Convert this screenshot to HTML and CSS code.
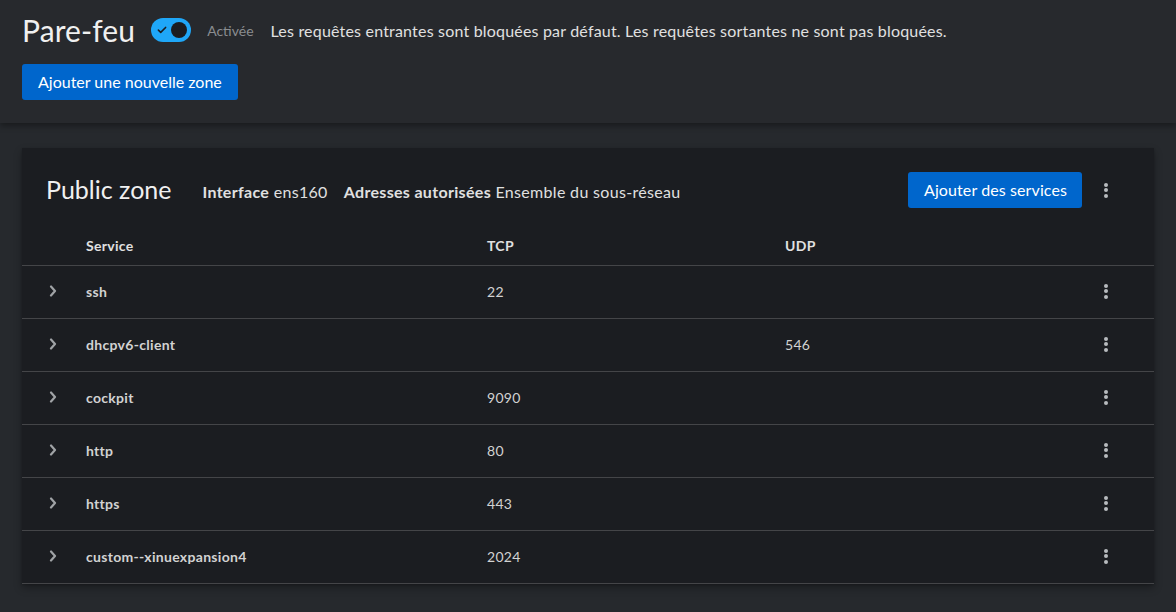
FILE: index.html
```html
<!DOCTYPE html>
<html lang="fr">
<head>
<meta charset="utf-8">
<title>Pare-feu</title>
<link rel="stylesheet" href="styles.css">
</head>
<body>
<header class="page-header">
  <div class="title-row">
    <h1 class="page-title">Pare-feu</h1>
    <span class="switch" role="switch" aria-checked="true">
      <svg class="switch-check" viewBox="0 0 12 10" width="10" height="8"><path d="M1.5 5.2 L4.4 8 L10.5 1.8" fill="none" stroke="#1b1d21" stroke-width="2" stroke-linecap="round" stroke-linejoin="round"/></svg>
      <span class="switch-knob"></span>
    </span>
    <span class="switch-label">Activée</span>
    <span class="status-text">Les requêtes entrantes sont bloquées par défaut. Les requêtes sortantes ne sont pas bloquées.</span>
  </div>
  <button class="btn btn-primary">Ajouter une nouvelle zone</button>
</header>

<main class="page-main">
  <section class="card">
    <div class="card-header">
      <h2 class="zone-title">Public zone</h2>
      <div class="zone-meta">
        <span><b>Interface</b> ens160</span>
        <span><b>Adresses autorisées</b> Ensemble du sous-réseau</span>
      </div>
      <div class="card-actions">
        <button class="btn btn-primary">Ajouter des services</button>
        <span class="kebab"><i></i><i></i><i></i></span>
      </div>
    </div>

    <div class="table">
      <div class="trow thead">
        <div></div>
        <div>Service</div>
        <div>TCP</div>
        <div>UDP</div>
        <div></div>
      </div>
      <div class="trow">
        <div class="toggle"><svg viewBox="0 0 8 12" width="8" height="12"><path d="M2 1.5 L6 6 L2 10.5" fill="none" stroke="currentColor" stroke-width="2.2" stroke-linecap="round" stroke-linejoin="round"/></svg></div>
        <div class="name">ssh</div>
        <div>22</div>
        <div></div>
        <div class="act"><span class="kebab"><i></i><i></i><i></i></span></div>
      </div>
      <div class="trow">
        <div class="toggle"><svg viewBox="0 0 8 12" width="8" height="12"><path d="M2 1.5 L6 6 L2 10.5" fill="none" stroke="currentColor" stroke-width="2.2" stroke-linecap="round" stroke-linejoin="round"/></svg></div>
        <div class="name">dhcpv6-client</div>
        <div></div>
        <div>546</div>
        <div class="act"><span class="kebab"><i></i><i></i><i></i></span></div>
      </div>
      <div class="trow">
        <div class="toggle"><svg viewBox="0 0 8 12" width="8" height="12"><path d="M2 1.5 L6 6 L2 10.5" fill="none" stroke="currentColor" stroke-width="2.2" stroke-linecap="round" stroke-linejoin="round"/></svg></div>
        <div class="name">cockpit</div>
        <div>9090</div>
        <div></div>
        <div class="act"><span class="kebab"><i></i><i></i><i></i></span></div>
      </div>
      <div class="trow">
        <div class="toggle"><svg viewBox="0 0 8 12" width="8" height="12"><path d="M2 1.5 L6 6 L2 10.5" fill="none" stroke="currentColor" stroke-width="2.2" stroke-linecap="round" stroke-linejoin="round"/></svg></div>
        <div class="name">http</div>
        <div>80</div>
        <div></div>
        <div class="act"><span class="kebab"><i></i><i></i><i></i></span></div>
      </div>
      <div class="trow">
        <div class="toggle"><svg viewBox="0 0 8 12" width="8" height="12"><path d="M2 1.5 L6 6 L2 10.5" fill="none" stroke="currentColor" stroke-width="2.2" stroke-linecap="round" stroke-linejoin="round"/></svg></div>
        <div class="name">https</div>
        <div>443</div>
        <div></div>
        <div class="act"><span class="kebab"><i></i><i></i><i></i></span></div>
      </div>
      <div class="trow">
        <div class="toggle"><svg viewBox="0 0 8 12" width="8" height="12"><path d="M2 1.5 L6 6 L2 10.5" fill="none" stroke="currentColor" stroke-width="2.2" stroke-linecap="round" stroke-linejoin="round"/></svg></div>
        <div class="name">custom--xinuexpansion4</div>
        <div>2024</div>
        <div></div>
        <div class="act"><span class="kebab"><i></i><i></i><i></i></span></div>
      </div>
    </div>
  </section>
</main>
</body>
</html>
```

FILE: styles.css
```css
* { box-sizing: border-box; }

html, body {
  margin: 0;
  height: 100%;
}

body {
  background: #26292d;
  color: #e0e0e0;
  font-family: "Lato", "Liberation Sans", sans-serif;
  font-size: 16px;
  overflow: hidden;
}

.page-header {
  background: #27292d;
  padding: 12px 22px 23px;
  height: 123px;
  box-shadow: 0 3px 6px rgba(0, 0, 0, 0.35);
  position: relative;
  z-index: 1;
}

.title-row {
  display: flex;
  align-items: center;
  height: 36px;
  margin-bottom: 16px;
}

.page-title {
  margin: 0;
  font-size: 30px;
  font-weight: 400;
  color: #f0f0f0;
  line-height: 36px;
  letter-spacing: 0.1px;
}

.switch {
  position: relative;
  display: inline-block;
  width: 40px;
  height: 24px;
  border-radius: 12px;
  background: #1fa7f8;
  margin-left: 16px;
}

.switch-check {
  position: absolute;
  left: 6px;
  top: 8px;
}

.switch-knob {
  position: absolute;
  right: 4px;
  top: 4px;
  width: 16px;
  height: 16px;
  border-radius: 50%;
  background: #1b1d21;
}

.switch-label {
  margin-left: 16px;
  font-size: 14px;
  color: #8a8d90;
}

.status-text {
  margin-left: 17px;
  font-size: 16px;
  color: #e0e0e0;
  letter-spacing: 0.19px;
}

.btn {
  font-family: inherit;
  font-size: 16px;
  border: 0;
  border-radius: 3px;
  height: 36px;
  padding: 0 16px 1px;
  cursor: pointer;
}

.btn-primary {
  background: #0066cc;
  color: #ffffff;
}

.card-actions .btn-primary {
  padding: 0 15px 1px 16px;
  letter-spacing: 0.1px;
}

.page-main {
  padding: 25px 22px 0;
}

.card {
  background: #1b1d21;
  box-shadow: 0 4px 8px rgba(0, 0, 0, 0.3), 0 1px 2px rgba(0, 0, 0, 0.2);
}

.card-header {
  display: flex;
  align-items: center;
  padding: 24px 0 0 24px;
  height: 60px;
}

.zone-title {
  margin: 0 0 2px;
  font-size: 25px;
  font-weight: 400;
  color: #f0f0f0;
  line-height: 36px;
}

.zone-meta {
  display: flex;
  gap: 16px;
  margin-left: 31px;
  font-size: 16px;
  color: #e0e0e0;
  margin-top: 2px;
  letter-spacing: 0.32px;
}

.zone-meta b {
  font-weight: 700;
}

.card-actions {
  margin-left: auto;
  display: flex;
  align-items: center;
}

.card-actions .btn {
  margin-right: 22px;
}

.card-actions .kebab {
  margin-right: 46px;
}

.kebab {
  display: inline-flex;
  flex-direction: column;
  align-items: center;
  gap: 1.5px;
  width: 4px;
}

.kebab i {
  display: block;
  width: 4px;
  height: 4px;
  border-radius: 50%;
  background: #b8bbbe;
}

.trow {
  display: grid;
  grid-template-columns: 64px 401px 298px 1fr 96px;
  align-items: center;
  height: 53px;
  padding-bottom: 2px;
  border-bottom: 1px solid #444548;
  font-size: 14px;
  color: #d2d2d2;
  letter-spacing: 0.3px;
}

.trow.thead {
  height: 58px;
  align-items: end;
  padding-bottom: 11px;
  font-weight: 700;
  color: #e0e0e0;
}

.toggle {
  padding-left: 27px;
  color: #a0a3a6;
  display: flex;
  align-items: center;
}

.name {
  font-weight: 700;
}

.act {
  display: flex;
  justify-content: center;
}
```
